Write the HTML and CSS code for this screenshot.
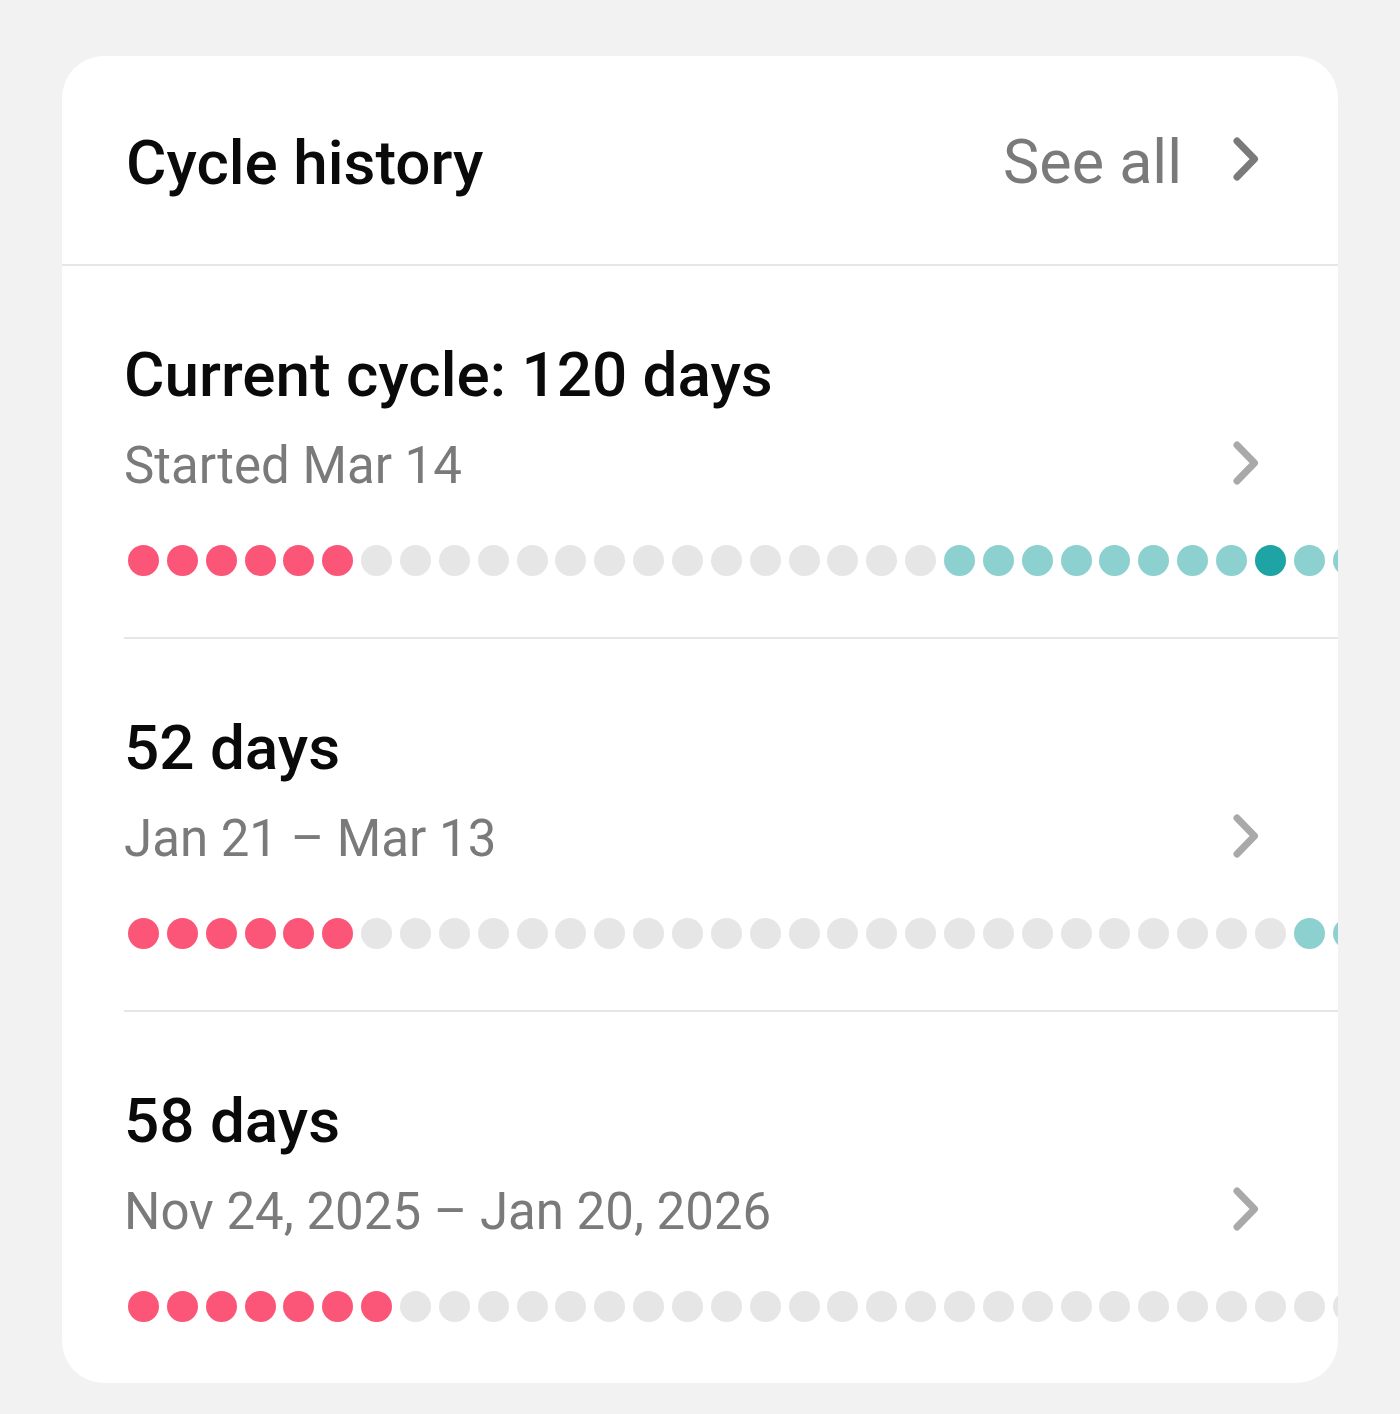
FILE: index.html
```html
<!DOCTYPE html>
<html lang="en">
<head>
  <meta charset="UTF-8" />
  <meta name="viewport" content="width=device-width, initial-scale=1.0" />
  <title>Cycle history</title>
  <link rel="stylesheet" href="styles.css">
</head>
<body>
  <div class="card">
    <header class="card-header">
      <h1>Cycle history</h1>
      <a class="see-all" href="#">
        <span>See all</span>
        <svg class="chevron" viewBox="0 0 28 46" width="28" height="46">
          <path d="M5 5 L22.5 23 L5 41" />
        </svg>
      </a>
    </header>

    <ul class="cycles">
      <li class="cycle" data-dots="6p,15g,8t,1d,2t">
        <div class="cycle-info">
          <h2>Current cycle: 120 days</h2>
          <div class="cycle-sub">
            <span>Started Mar 14</span>
            <svg class="chevron light" viewBox="0 0 28 46" width="28" height="46">
              <path d="M5 5 L22.5 23 L5 41" />
            </svg>
          </div>
        </div>
        <div class="dots"></div>
      </li>
      <li class="cycle" data-dots="6p,24g,2t">
        <div class="cycle-info">
          <h2>52 days</h2>
          <div class="cycle-sub">
            <span>Jan 21 – Mar 13</span>
            <svg class="chevron light" viewBox="0 0 28 46" width="28" height="46">
              <path d="M5 5 L22.5 23 L5 41" />
            </svg>
          </div>
        </div>
        <div class="dots"></div>
      </li>
      <li class="cycle" data-dots="7p,25g">
        <div class="cycle-info">
          <h2>58 days</h2>
          <div class="cycle-sub">
            <span>Nov 24, 2025 – Jan 20, 2026</span>
            <svg class="chevron light" viewBox="0 0 28 46" width="28" height="46">
              <path d="M5 5 L22.5 23 L5 41" />
            </svg>
          </div>
        </div>
        <div class="dots"></div>
      </li>
    </ul>
  </div>

  <script>
    // Build the day dots for each cycle from its data-dots string
    const kinds = { p: 'period', g: 'empty', t: 'fertile', d: 'ovulation' };
    document.querySelectorAll('.cycle').forEach(cycle => {
      const dots = cycle.querySelector('.dots');
      cycle.dataset.dots.split(',').forEach(part => {
        const count = parseInt(part, 10);
        const kind = kinds[part.slice(-1)];
        for (let i = 0; i < count; i++) {
          const dot = document.createElement('span');
          dot.className = 'dot ' + kind;
          dots.appendChild(dot);
        }
      });
    });
  </script>
</body>
</html>
```

FILE: styles.css
```css
:root {
  --page-bg: #f2f2f2;
  --card-bg: #ffffff;
  --text: #0a0a0a;
  --muted: #7a7a7a;
  --chevron-light: #a9a9a9;
  --line: #e6e6e6;
  --period: #fb5577;
  --empty: #e6e6e6;
  --fertile: #8dd0d0;
  --ovulation: #1ea4a4;
}

* {
  margin: 0;
  padding: 0;
  box-sizing: border-box;
}

body {
  font-family: Roboto, 'Noto Sans', sans-serif;
  background: var(--page-bg);
  color: var(--text);
  padding: 56px 62px 30px;
}

.card {
  background: var(--card-bg);
  border-radius: 42px;
  overflow: hidden;
}

.card-header {
  height: 210px;
  display: flex;
  align-items: center;
  justify-content: space-between;
  padding: 6px 78px 0 64px;
  border-bottom: 2px solid var(--line);
}

.card-header h1 {
  font-size: 62px;
  font-weight: 500;
  line-height: 72px;
}

.see-all {
  display: flex;
  align-items: center;
  gap: 50px;
  color: var(--muted);
  text-decoration: none;
  font-size: 61px;
  line-height: 72px;
  margin-top: -2px;
}

.chevron {
  display: block;
  fill: none;
  stroke: var(--muted);
  stroke-width: 7;
  stroke-linecap: round;
  stroke-linejoin: round;
}

.see-all .chevron {
  margin-top: -6px;
}

.chevron.light {
  stroke: var(--chevron-light);
}

.cycles {
  list-style: none;
}

.cycle {
  margin-left: 62px;
  padding: 73px 0 61px;
  border-bottom: 2px solid var(--line);
}

.cycle:last-child {
  border-bottom: none;
}

.cycle-info {
  padding-right: 78px;
}

.cycle-info h2 {
  font-size: 62px;
  font-weight: 500;
  line-height: 72px;
}

.cycle-sub {
  display: flex;
  align-items: center;
  justify-content: space-between;
  margin-top: 25px;
  color: var(--muted);
  font-size: 51px;
  line-height: 60px;
}

.cycle-sub .chevron {
  margin-top: -6px;
}

.dots {
  display: flex;
  gap: 7.87px;
  margin-top: 49px;
  padding-left: 4px;
  overflow: hidden;
}

.dot {
  flex: none;
  width: 31px;
  height: 31px;
  border-radius: 50%;
}

.dot.period { background: var(--period); }
.dot.empty { background: var(--empty); }
.dot.fertile { background: var(--fertile); }
.dot.ovulation { background: var(--ovulation); }
```
